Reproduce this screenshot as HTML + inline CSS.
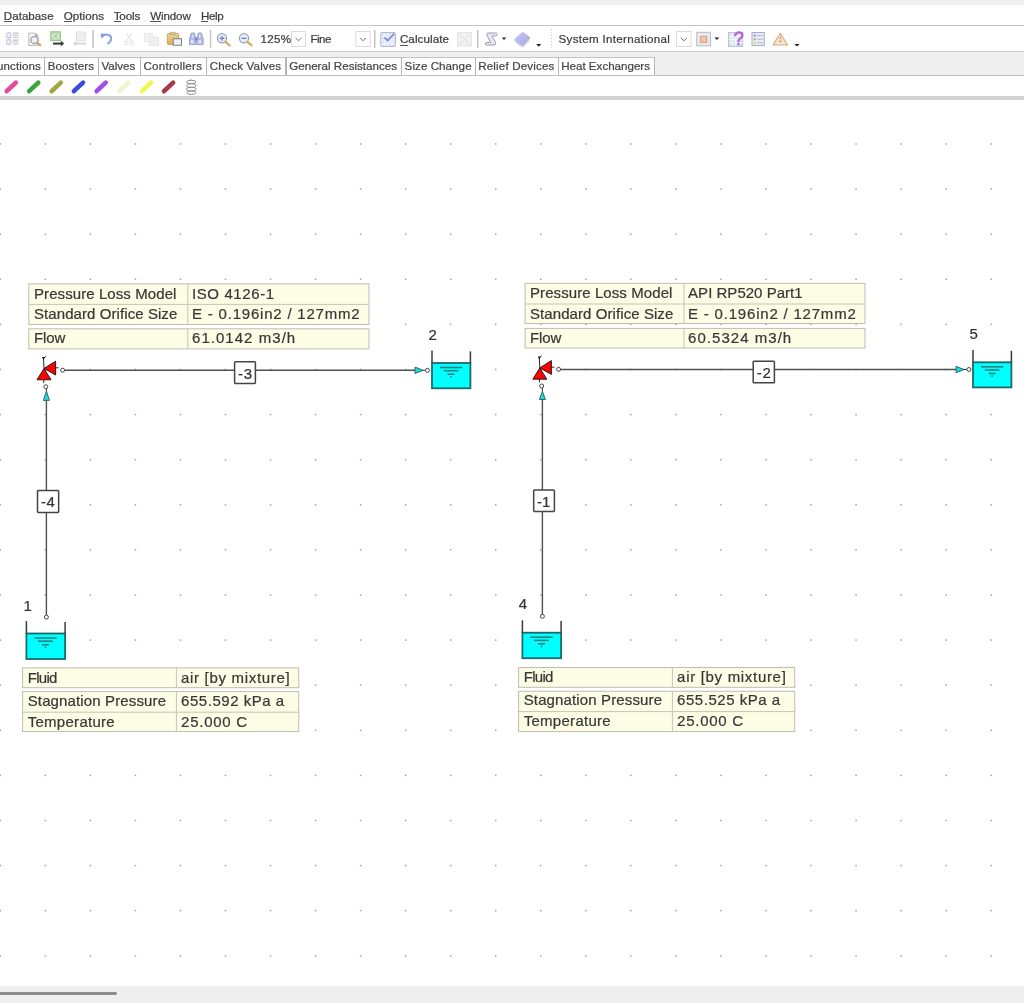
<!DOCTYPE html>
<html><head><meta charset="utf-8">
<style>
html,body{margin:0;padding:0}
body{width:1024px;height:1003px;position:relative;overflow:hidden;background:#fff;font-family:"Liberation Sans",sans-serif;color:#333}
.a{position:absolute}
.t{position:absolute;white-space:nowrap;-webkit-text-stroke:0.22px currentColor}
.hl{position:absolute;left:0;width:1024px}
.mi{position:absolute;top:5px;font-size:12px;line-height:18px;color:#3a3a3a;white-space:nowrap}
.u{text-decoration:underline;text-underline-offset:2px;text-decoration-thickness:1px}
.tab{position:absolute;top:57px;height:18px;background:#fff;font-size:12px;line-height:18px;color:#444;white-space:nowrap;text-align:center}
.tsep{position:absolute;top:57px;width:1px;height:19px;background:#b8b8b8}
.tb{position:absolute;font-size:12px;line-height:14px;color:#3a3a3a;white-space:nowrap}
.sep{position:absolute;top:30px;width:2px;height:18px;background:#c4c4c4}
.dd{position:absolute;top:31px;width:14px;height:15px;border:1px solid #dcdcdc;background:#fff;box-sizing:border-box}
.tbl{position:absolute;background:#fdfde5;border:1px solid #bdbdb3;box-sizing:border-box}
.cell{position:absolute;font-size:15px;line-height:20px;color:#3a3a3a;white-space:nowrap}
.lbl{position:absolute;font-size:15px;line-height:16px;color:#333;white-space:nowrap}
</style></head>
<body>
<div id="wrap" style="position:absolute;left:0;top:0;width:1024px;height:1003px;filter:blur(0.6px)">
<!-- top chrome -->
<div class="hl" style="top:0;height:5px;background:#f0f0f0"></div>
<div class="hl" style="top:25px;height:1px;background:#c6c6c6"></div>
<div class="hl" style="top:51px;height:1px;background:#c8c8c8"></div>
<div class="hl" style="top:52px;height:23px;background:#efefef"></div>
<div class="hl" style="top:75px;height:1px;background:#bdbdbd"></div>
<div class="hl" style="top:96px;height:4px;background:#d2d2d2"></div>
<div class="hl" style="top:986px;height:17px;background:#efefef"></div>
<div class="a" style="left:0;top:992px;width:117px;height:3px;background:#8c8c8c;border-radius:0 2px 2px 0"></div>

<!-- tabs -->
<div class="a" style="left:0;top:57px;width:655px;height:18px;background:#fff;border-top:1px solid #c4c4c4;box-sizing:border-box;height:18px"></div>
<div class="a" style="left:43.5px;top:57px;width:1.3px;height:18px;background:#b4b4b4"></div>
<div class="a" style="left:97.9px;top:57px;width:1.3px;height:18px;background:#b4b4b4"></div>
<div class="a" style="left:140.2px;top:57px;width:1.3px;height:18px;background:#b4b4b4"></div>
<div class="a" style="left:206.0px;top:57px;width:1.3px;height:18px;background:#b4b4b4"></div>
<div class="a" style="left:285.4px;top:57px;width:1.3px;height:18px;background:#b4b4b4"></div>
<div class="a" style="left:401.0px;top:57px;width:1.3px;height:18px;background:#b4b4b4"></div>
<div class="a" style="left:475.2px;top:57px;width:1.3px;height:18px;background:#b4b4b4"></div>
<div class="a" style="left:558.2px;top:57px;width:1.3px;height:18px;background:#b4b4b4"></div>
<div class="a" style="left:653.5px;top:57px;width:1.3px;height:18px;background:#b4b4b4"></div>
<div class="t" style="left:-10.20px;top:59.28px;font-size:11.6px;line-height:14px;letter-spacing:0.088px;color:#454545;">Functions</div>
<div class="t" style="left:47.70px;top:59.28px;font-size:11.6px;line-height:14px;letter-spacing:0.086px;color:#454545;">Boosters</div>
<div class="t" style="left:101.40px;top:59.28px;font-size:11.6px;line-height:14px;letter-spacing:-0.010px;color:#454545;">Valves</div>
<div class="t" style="left:143.50px;top:59.28px;font-size:11.6px;line-height:14px;letter-spacing:0.240px;color:#454545;">Controllers</div>
<div class="t" style="left:209.70px;top:59.28px;font-size:11.6px;line-height:14px;letter-spacing:0.132px;color:#454545;">Check Valves</div>
<div class="t" style="left:289.20px;top:59.28px;font-size:11.6px;line-height:14px;letter-spacing:0.017px;color:#454545;">General Resistances</div>
<div class="t" style="left:404.60px;top:59.28px;font-size:11.6px;line-height:14px;letter-spacing:0.060px;color:#454545;">Size Change</div>
<div class="t" style="left:478.20px;top:59.28px;font-size:11.6px;line-height:14px;letter-spacing:0.158px;color:#454545;">Relief Devices</div>
<div class="t" style="left:561.20px;top:59.28px;font-size:11.6px;line-height:14px;letter-spacing:-0.007px;color:#454545;">Heat Exchangers</div>
<div class="t" style="left:3.80px;top:8.88px;font-size:11.6px;line-height:14px;letter-spacing:0.021px;color:#3c3c3c;">Database</div>
<div class="t" style="left:63.80px;top:8.88px;font-size:11.6px;line-height:14px;letter-spacing:0.033px;color:#3c3c3c;">Options</div>
<div class="t" style="left:113.70px;top:8.88px;font-size:11.6px;line-height:14px;letter-spacing:-0.125px;color:#3c3c3c;">Tools</div>
<div class="t" style="left:150.30px;top:8.88px;font-size:11.6px;line-height:14px;letter-spacing:-0.150px;color:#3c3c3c;">Window</div>
<div class="t" style="left:200.90px;top:8.88px;font-size:11.6px;line-height:14px;letter-spacing:-0.350px;color:#3c3c3c;">Help</div>
<div class="a" style="left:3.8px;top:21px;width:8.2px;height:1px;background:#555"></div>
<div class="a" style="left:63.8px;top:21px;width:8.5px;height:1px;background:#555"></div>
<div class="a" style="left:113.7px;top:21px;width:7.2px;height:1px;background:#555"></div>
<div class="a" style="left:150.3px;top:21px;width:11px;height:1px;background:#555"></div>
<div class="a" style="left:200.9px;top:21px;width:7.6px;height:1px;background:#555"></div>

<!-- pencils -->
<svg class="a" style="left:0;top:76px" width="220" height="20" viewBox="0 76 220 20">
<line x1="6.7" y1="91.2" x2="15.8" y2="82.6" stroke="#e8489c" stroke-width="4.6" stroke-linecap="round"/>
<line x1="29.2" y1="91.2" x2="38.3" y2="82.6" stroke="#3ca43c" stroke-width="4.6" stroke-linecap="round"/>
<line x1="51.7" y1="91.2" x2="60.8" y2="82.6" stroke="#a4a444" stroke-width="4.6" stroke-linecap="round"/>
<line x1="73.9" y1="91.2" x2="83.0" y2="82.6" stroke="#3c4cdc" stroke-width="4.6" stroke-linecap="round"/>
<line x1="96.6" y1="91.2" x2="105.7" y2="82.6" stroke="#a050e8" stroke-width="4.6" stroke-linecap="round"/>
<line x1="119.2" y1="91.2" x2="128.3" y2="82.6" stroke="#eef6d0" stroke-width="4.6" stroke-linecap="round"/>
<line x1="142.0" y1="91.2" x2="151.1" y2="82.6" stroke="#f0f850" stroke-width="4.6" stroke-linecap="round"/>
<line x1="164.0" y1="91.2" x2="173.1" y2="82.6" stroke="#a83a48" stroke-width="4.6" stroke-linecap="round"/>
<g fill="none" stroke="#8a8a8a" stroke-width="1"><ellipse cx="191.3" cy="82" rx="4.6" ry="1.8"/><ellipse cx="191.3" cy="85.6" rx="5" ry="2"/><ellipse cx="191.3" cy="89.2" rx="5" ry="2"/><ellipse cx="191.3" cy="92.6" rx="4.6" ry="1.8"/><line x1="191.3" y1="79.5" x2="191.3" y2="80.5"/></g>
</svg>
<!-- toolbar -->
<div class="t" style="left:260.60px;top:32.38px;font-size:11.6px;line-height:14px;letter-spacing:0.250px;color:#3c3c3c;">125%</div>
<div class="t" style="left:310.40px;top:32.38px;font-size:11.6px;line-height:14px;letter-spacing:-0.483px;color:#3c3c3c;">Fine</div>
<div class="t" style="left:399.90px;top:32.38px;font-size:11.6px;line-height:14px;letter-spacing:0.106px;color:#3c3c3c;">Calculate</div>
<div class="t" style="left:558.50px;top:32.38px;font-size:11.6px;line-height:14px;letter-spacing:0.303px;color:#3c3c3c;">System International</div>
<div class="a" style="left:400px;top:45px;width:8px;height:1px;background:#555"></div>
<svg class="a" style="left:0;top:0" width="1024" height="52" viewBox="0 0 1024 52">
<defs>
<linearGradient id="gold" x1="0" y1="0" x2="0" y2="1"><stop offset="0" stop-color="#e8d49a"/><stop offset="1" stop-color="#e0b048"/></linearGradient>
<linearGradient id="lav" x1="0" y1="0" x2="1" y2="1"><stop offset="0" stop-color="#c4c4f4"/><stop offset="1" stop-color="#a8a8e0"/></linearGradient>
</defs>
<!-- separators -->
<g fill="#c4c4c4">
<rect x="92.3" y="30" width="1.5" height="18"/>
<rect x="209.8" y="30" width="1.5" height="18"/>
<rect x="374" y="30" width="1.5" height="18"/>
<rect x="477" y="30" width="1.5" height="18"/>
</g>
<g fill="#cccccc"><rect x="551" y="29" width="1" height="1.2"/><rect x="551" y="32" width="1" height="1.2"/><rect x="551" y="35" width="1" height="1.2"/><rect x="551" y="38" width="1" height="1.2"/><rect x="551" y="41" width="1" height="1.2"/><rect x="551" y="44" width="1" height="1.2"/><rect x="551" y="47" width="1" height="1.2"/></g>
<!-- 1 list -->
<g fill="#eef0fa" stroke="#c4c8e6" stroke-width="1.1"><rect x="6.6" y="32.8" width="4.4" height="4.8" rx="1.2"/><rect x="6.6" y="39.6" width="4.4" height="4.8" rx="1.2"/></g>
<g fill="#bcbcc6"><rect x="13" y="32.6" width="5.6" height="1.2"/><rect x="13" y="34.8" width="5.6" height="0.9"/><rect x="13" y="36.8" width="5.6" height="0.9"/><rect x="13" y="39.5" width="5.6" height="1.2"/><rect x="13" y="41.6" width="5.6" height="0.9"/><rect x="13" y="43.6" width="5.6" height="0.9"/></g>
<!-- 2 print preview -->
<path d="M28.8,33.2 H35.5 L38,35.7 V45.4 H28.8 Z" fill="#f8f8f8" stroke="#b8b8b8" stroke-width="1"/>
<polygon points="35.3,33.2 38.2,36.2 35.3,36.2" fill="#9a9a9a"/>
<circle cx="34.4" cy="40" r="3.6" fill="#eef2fa" stroke="#a8a8b0" stroke-width="1.5"/>
<line x1="37" y1="42.8" x2="40.2" y2="45.2" stroke="#c8a860" stroke-width="2.2" stroke-linecap="round"/>
<!-- 3 export -->
<rect x="50.8" y="31.8" width="9.5" height="8.8" fill="#c0e0b8" stroke="#94c088" stroke-width="1"/>
<rect x="52.5" y="34" width="6" height="4.4" fill="#e4f2de"/>
<g stroke="#70a868" stroke-width="0.8"><line x1="53.5" y1="34.5" x2="57.5" y2="38"/><line x1="57.5" y1="34.5" x2="53.5" y2="38"/></g>
<line x1="53" y1="43.6" x2="61.5" y2="43.6" stroke="#3a3a3a" stroke-width="2"/>
<polygon points="60.8,40.8 64.2,43.6 60.8,46.4" fill="#3a3a3a"/>
<!-- 4 import disabled -->
<rect x="76.5" y="32" width="8.8" height="8.8" fill="#f0f0f0" stroke="#dedede" stroke-width="1"/>
<line x1="75.5" y1="43.6" x2="86" y2="43.6" stroke="#d4d4d4" stroke-width="1.8"/>
<polygon points="76.2,41 73.2,43.6 76.2,46.2" fill="#d4d4d4"/>
<!-- 5 undo -->
<path d="M103,35.6 Q108.2,32.8 110.8,36.6 Q112,40.6 108.2,43.4" fill="none" stroke="#86a2e2" stroke-width="2" stroke-linecap="round"/>
<polygon points="100.6,33.6 105.8,34 101.6,38.8" fill="#7c9ce0"/>
<!-- 6 cut disabled -->
<g stroke="#e4e4e4" stroke-width="1.1" fill="none"><line x1="126" y1="33" x2="131.8" y2="41"/><line x1="131.8" y1="33" x2="126" y2="41"/><circle cx="126.2" cy="43" r="1.7"/><circle cx="131.6" cy="43" r="1.7"/></g>
<!-- 7 copy disabled -->
<rect x="144.3" y="33.3" width="8" height="8.5" fill="#f2f2f2" stroke="#e8e8e8"/>
<rect x="149.8" y="37.2" width="8.8" height="8.2" fill="#f0f0f0" stroke="#e6e6e6"/>
<!-- 8 paste -->
<rect x="167.3" y="33.5" width="11.4" height="11" rx="1.2" fill="url(#gold)" stroke="#c0a060" stroke-width="0.9"/>
<rect x="170" y="32.4" width="5.5" height="2.4" rx="0.8" fill="#d8d0a0" stroke="#a09060" stroke-width="0.6"/>
<rect x="173.2" y="38.8" width="8.3" height="6.4" fill="#eef0f4" stroke="#787c88" stroke-width="1"/>
<!-- 9 binoculars -->
<g fill="#b4bce6" stroke="#8c96c8" stroke-width="0.8">
<path d="M189.5,44.6 V39 L191.2,33 H194.4 L195.8,39 V44.6 Z"/>
<path d="M196.8,44.6 V39 L198.2,33 H201.4 L203.2,39 V44.6 Z"/>
</g>
<rect x="195.2" y="37.5" width="2.2" height="3" fill="#7480b8"/>
<g fill="#dfe6fa"><rect x="190.8" y="40" width="2.8" height="3.6" rx="1"/><rect x="198.4" y="40" width="2.8" height="3.6" rx="1"/><rect x="192" y="34.5" width="1.4" height="3"/><rect x="199" y="34.5" width="1.4" height="3"/></g>
<!-- 10 zoom in -->
<circle cx="222" cy="38.3" r="4.6" fill="#e8eef8" stroke="#9aa2b4" stroke-width="1.2"/>
<line x1="225.4" y1="41.8" x2="229.6" y2="45.4" stroke="#d0b060" stroke-width="2.3" stroke-linecap="round"/>
<g stroke="#5a78c0" stroke-width="1.2"><line x1="219.6" y1="38.3" x2="224.4" y2="38.3"/><line x1="222" y1="35.9" x2="222" y2="40.7"/></g>
<!-- 11 zoom out -->
<circle cx="244" cy="38.3" r="4.6" fill="#e8eef8" stroke="#9aa2b4" stroke-width="1.2"/>
<line x1="247.4" y1="41.8" x2="251.6" y2="45.4" stroke="#d0b060" stroke-width="2.3" stroke-linecap="round"/>
<line x1="241.6" y1="38.3" x2="246.4" y2="38.3" stroke="#5a78c0" stroke-width="1.2"/>
<!-- dropdowns -->
<g fill="#fff" stroke="#dcdcdc" stroke-width="1">
<rect x="291.5" y="31.5" width="14" height="15"/>
<rect x="355.8" y="31.5" width="14.5" height="15"/>
<rect x="676.5" y="31.5" width="14.5" height="15"/>
</g>
<g fill="none" stroke="#707070" stroke-width="1">
<polyline points="295.5,37.8 298.5,40.8 301.5,37.8"/>
<polyline points="360,37.8 363,40.8 366,37.8"/>
<polyline points="680.8,37.8 683.8,40.8 686.8,37.8"/>
</g>
<!-- 14 calculate -->
<rect x="380.8" y="32.6" width="14.6" height="13.8" rx="0.8" fill="#dfe6f6" stroke="#b0b4cc" stroke-width="1"/>
<g stroke="#f4f6fc" stroke-width="0.8"><line x1="381" y1="36.4" x2="395" y2="36.4"/><line x1="381" y1="40" x2="395" y2="40"/><line x1="381" y1="43.4" x2="395" y2="43.4"/><line x1="384.6" y1="33" x2="384.6" y2="46"/><line x1="388.2" y1="33" x2="388.2" y2="46"/><line x1="391.8" y1="33" x2="391.8" y2="46"/></g>
<polyline points="384.4,37.6 387.6,40.6 394.2,33.6" fill="none" stroke="#8c96da" stroke-width="2.1" stroke-linejoin="round"/>
<!-- 15 disabled -->
<rect x="457.5" y="32.5" width="14" height="13.5" fill="#f0f0f0" stroke="#e4e4e4"/>
<g stroke="#e0e0e0" stroke-width="1"><line x1="459" y1="34" x2="470" y2="45"/><line x1="470" y1="34" x2="459" y2="45"/></g>
<!-- 16 scroll -->
<path d="M487.5,33 H496.5 Q498.5,34.5 496.2,36 H491.8 L495.2,41.6 Q496.8,45 494,45 H486 Q484,44 486,42.5 H490.5 L487.5,36.5 Q486,33.8 487.5,33 Z" fill="#e6e6f4" stroke="#a0a0b4" stroke-width="1"/>
<polygon points="501.8,37.4 506.2,37.4 504,40" fill="#222"/>
<!-- 17 book -->
<path d="M514.8,40.5 Q514.6,39.4 515.6,38.6 L521.6,33 Q522.6,32.2 523.6,32.8 L529.4,37 Q530.4,38 529.4,39 L523.4,45.4 Q522.4,46.4 521.2,45.6 Z" fill="url(#lav)" stroke="#a8a8d8" stroke-width="0.6"/>
<path d="M515,41.6 L521.4,46.6 Q522.6,47.2 523.6,46.4 L529.6,40.2" fill="none" stroke="#d8d8f4" stroke-width="1.2"/>
<polygon points="536.2,44 541.2,44 538.7,46.7" fill="#222"/>
<!-- 20 orange grid -->
<rect x="696.8" y="32.3" width="13.8" height="13.5" fill="#e6eaf2" stroke="#b4bacb" stroke-width="1"/>
<rect x="700.6" y="36.2" width="6.2" height="6.2" fill="#f4c4a8" stroke="#e89070" stroke-width="0.9"/>
<polygon points="714.5,37.4 719.3,37.4 716.9,40" fill="#222"/>
<!-- 21 grid ? -->
<rect x="728.5" y="32.6" width="14.2" height="13.8" fill="#dde6f0" stroke="#b4bccc" stroke-width="1"/>
<g stroke="#f4f8fc" stroke-width="0.9"><line x1="728.5" y1="36.2" x2="742.7" y2="36.2"/><line x1="728.5" y1="39.6" x2="742.7" y2="39.6"/><line x1="728.5" y1="43" x2="742.7" y2="43"/><line x1="732" y1="32.6" x2="732" y2="46.4"/><line x1="735.5" y1="32.6" x2="735.5" y2="46.4"/><line x1="739" y1="32.6" x2="739" y2="46.4"/></g>
<path d="M735.2,35.2 Q736,32.2 739.4,32.4 Q742.6,32.8 742.4,35.6 Q742.2,37.6 740,38.6 Q738.6,39.4 738.6,41.4" fill="none" stroke="#b468d4" stroke-width="2.3" stroke-linecap="round"/>
<circle cx="738.6" cy="44.2" r="1.3" fill="#b468d4"/>
<!-- 22 list -->
<rect x="752" y="32.5" width="12.3" height="13" fill="#e8ecf6" stroke="#a4aec8" stroke-width="1"/>
<g><circle cx="754.8" cy="35.6" r="1.1" fill="#8088d8"/><circle cx="754.8" cy="39.2" r="1.1" fill="#e89070"/><circle cx="754.8" cy="42.8" r="1.1" fill="#e8cc60"/></g>
<g fill="#b0bcd4"><rect x="757" y="35.1" width="6" height="1"/><rect x="757" y="38.7" width="6" height="1"/><rect x="757" y="42.3" width="6" height="1"/></g>
<!-- 23 warning -->
<polygon points="780.3,33.4 787.6,45 773,45" fill="#f6e2c8" stroke="#dcac80" stroke-width="1.1" stroke-linejoin="round"/>
<g fill="#8a7050"><rect x="779.8" y="37.2" width="1.1" height="1.6"/><rect x="779.8" y="40.6" width="1.1" height="1.6"/></g>
<polygon points="794.3,44 799.6,44 796.95,46.4" fill="#222"/>
</svg>


<!-- canvas -->
<svg class="a" style="left:0;top:0" width="1024" height="1003" viewBox="0 0 1024 1003">
<g fill="#a4a4a4"><rect x="-0.45" y="143.23" width="1.5" height="1.5"/>
<rect x="44.59" y="143.23" width="1.5" height="1.5"/>
<rect x="89.63" y="143.23" width="1.5" height="1.5"/>
<rect x="134.67" y="143.23" width="1.5" height="1.5"/>
<rect x="179.71" y="143.23" width="1.5" height="1.5"/>
<rect x="224.75" y="143.23" width="1.5" height="1.5"/>
<rect x="269.79" y="143.23" width="1.5" height="1.5"/>
<rect x="314.83" y="143.23" width="1.5" height="1.5"/>
<rect x="359.87" y="143.23" width="1.5" height="1.5"/>
<rect x="404.91" y="143.23" width="1.5" height="1.5"/>
<rect x="449.95" y="143.23" width="1.5" height="1.5"/>
<rect x="494.99" y="143.23" width="1.5" height="1.5"/>
<rect x="540.03" y="143.23" width="1.5" height="1.5"/>
<rect x="585.07" y="143.23" width="1.5" height="1.5"/>
<rect x="630.11" y="143.23" width="1.5" height="1.5"/>
<rect x="675.15" y="143.23" width="1.5" height="1.5"/>
<rect x="720.19" y="143.23" width="1.5" height="1.5"/>
<rect x="765.23" y="143.23" width="1.5" height="1.5"/>
<rect x="810.27" y="143.23" width="1.5" height="1.5"/>
<rect x="855.31" y="143.23" width="1.5" height="1.5"/>
<rect x="900.35" y="143.23" width="1.5" height="1.5"/>
<rect x="945.39" y="143.23" width="1.5" height="1.5"/>
<rect x="990.43" y="143.23" width="1.5" height="1.5"/>
<rect x="-0.45" y="188.33" width="1.5" height="1.5"/>
<rect x="44.59" y="188.33" width="1.5" height="1.5"/>
<rect x="89.63" y="188.33" width="1.5" height="1.5"/>
<rect x="134.67" y="188.33" width="1.5" height="1.5"/>
<rect x="179.71" y="188.33" width="1.5" height="1.5"/>
<rect x="224.75" y="188.33" width="1.5" height="1.5"/>
<rect x="269.79" y="188.33" width="1.5" height="1.5"/>
<rect x="314.83" y="188.33" width="1.5" height="1.5"/>
<rect x="359.87" y="188.33" width="1.5" height="1.5"/>
<rect x="404.91" y="188.33" width="1.5" height="1.5"/>
<rect x="449.95" y="188.33" width="1.5" height="1.5"/>
<rect x="494.99" y="188.33" width="1.5" height="1.5"/>
<rect x="540.03" y="188.33" width="1.5" height="1.5"/>
<rect x="585.07" y="188.33" width="1.5" height="1.5"/>
<rect x="630.11" y="188.33" width="1.5" height="1.5"/>
<rect x="675.15" y="188.33" width="1.5" height="1.5"/>
<rect x="720.19" y="188.33" width="1.5" height="1.5"/>
<rect x="765.23" y="188.33" width="1.5" height="1.5"/>
<rect x="810.27" y="188.33" width="1.5" height="1.5"/>
<rect x="855.31" y="188.33" width="1.5" height="1.5"/>
<rect x="900.35" y="188.33" width="1.5" height="1.5"/>
<rect x="945.39" y="188.33" width="1.5" height="1.5"/>
<rect x="990.43" y="188.33" width="1.5" height="1.5"/>
<rect x="-0.45" y="233.43" width="1.5" height="1.5"/>
<rect x="44.59" y="233.43" width="1.5" height="1.5"/>
<rect x="89.63" y="233.43" width="1.5" height="1.5"/>
<rect x="134.67" y="233.43" width="1.5" height="1.5"/>
<rect x="179.71" y="233.43" width="1.5" height="1.5"/>
<rect x="224.75" y="233.43" width="1.5" height="1.5"/>
<rect x="269.79" y="233.43" width="1.5" height="1.5"/>
<rect x="314.83" y="233.43" width="1.5" height="1.5"/>
<rect x="359.87" y="233.43" width="1.5" height="1.5"/>
<rect x="404.91" y="233.43" width="1.5" height="1.5"/>
<rect x="449.95" y="233.43" width="1.5" height="1.5"/>
<rect x="494.99" y="233.43" width="1.5" height="1.5"/>
<rect x="540.03" y="233.43" width="1.5" height="1.5"/>
<rect x="585.07" y="233.43" width="1.5" height="1.5"/>
<rect x="630.11" y="233.43" width="1.5" height="1.5"/>
<rect x="675.15" y="233.43" width="1.5" height="1.5"/>
<rect x="720.19" y="233.43" width="1.5" height="1.5"/>
<rect x="765.23" y="233.43" width="1.5" height="1.5"/>
<rect x="810.27" y="233.43" width="1.5" height="1.5"/>
<rect x="855.31" y="233.43" width="1.5" height="1.5"/>
<rect x="900.35" y="233.43" width="1.5" height="1.5"/>
<rect x="945.39" y="233.43" width="1.5" height="1.5"/>
<rect x="990.43" y="233.43" width="1.5" height="1.5"/>
<rect x="-0.45" y="278.53" width="1.5" height="1.5"/>
<rect x="44.59" y="278.53" width="1.5" height="1.5"/>
<rect x="89.63" y="278.53" width="1.5" height="1.5"/>
<rect x="134.67" y="278.53" width="1.5" height="1.5"/>
<rect x="179.71" y="278.53" width="1.5" height="1.5"/>
<rect x="224.75" y="278.53" width="1.5" height="1.5"/>
<rect x="269.79" y="278.53" width="1.5" height="1.5"/>
<rect x="314.83" y="278.53" width="1.5" height="1.5"/>
<rect x="359.87" y="278.53" width="1.5" height="1.5"/>
<rect x="404.91" y="278.53" width="1.5" height="1.5"/>
<rect x="449.95" y="278.53" width="1.5" height="1.5"/>
<rect x="494.99" y="278.53" width="1.5" height="1.5"/>
<rect x="540.03" y="278.53" width="1.5" height="1.5"/>
<rect x="585.07" y="278.53" width="1.5" height="1.5"/>
<rect x="630.11" y="278.53" width="1.5" height="1.5"/>
<rect x="675.15" y="278.53" width="1.5" height="1.5"/>
<rect x="720.19" y="278.53" width="1.5" height="1.5"/>
<rect x="765.23" y="278.53" width="1.5" height="1.5"/>
<rect x="810.27" y="278.53" width="1.5" height="1.5"/>
<rect x="855.31" y="278.53" width="1.5" height="1.5"/>
<rect x="900.35" y="278.53" width="1.5" height="1.5"/>
<rect x="945.39" y="278.53" width="1.5" height="1.5"/>
<rect x="990.43" y="278.53" width="1.5" height="1.5"/>
<rect x="-0.45" y="323.63" width="1.5" height="1.5"/>
<rect x="44.59" y="323.63" width="1.5" height="1.5"/>
<rect x="89.63" y="323.63" width="1.5" height="1.5"/>
<rect x="134.67" y="323.63" width="1.5" height="1.5"/>
<rect x="179.71" y="323.63" width="1.5" height="1.5"/>
<rect x="224.75" y="323.63" width="1.5" height="1.5"/>
<rect x="269.79" y="323.63" width="1.5" height="1.5"/>
<rect x="314.83" y="323.63" width="1.5" height="1.5"/>
<rect x="359.87" y="323.63" width="1.5" height="1.5"/>
<rect x="404.91" y="323.63" width="1.5" height="1.5"/>
<rect x="449.95" y="323.63" width="1.5" height="1.5"/>
<rect x="494.99" y="323.63" width="1.5" height="1.5"/>
<rect x="540.03" y="323.63" width="1.5" height="1.5"/>
<rect x="585.07" y="323.63" width="1.5" height="1.5"/>
<rect x="630.11" y="323.63" width="1.5" height="1.5"/>
<rect x="675.15" y="323.63" width="1.5" height="1.5"/>
<rect x="720.19" y="323.63" width="1.5" height="1.5"/>
<rect x="765.23" y="323.63" width="1.5" height="1.5"/>
<rect x="810.27" y="323.63" width="1.5" height="1.5"/>
<rect x="855.31" y="323.63" width="1.5" height="1.5"/>
<rect x="900.35" y="323.63" width="1.5" height="1.5"/>
<rect x="945.39" y="323.63" width="1.5" height="1.5"/>
<rect x="990.43" y="323.63" width="1.5" height="1.5"/>
<rect x="-0.45" y="368.73" width="1.5" height="1.5"/>
<rect x="44.59" y="368.73" width="1.5" height="1.5"/>
<rect x="89.63" y="368.73" width="1.5" height="1.5"/>
<rect x="134.67" y="368.73" width="1.5" height="1.5"/>
<rect x="179.71" y="368.73" width="1.5" height="1.5"/>
<rect x="224.75" y="368.73" width="1.5" height="1.5"/>
<rect x="269.79" y="368.73" width="1.5" height="1.5"/>
<rect x="314.83" y="368.73" width="1.5" height="1.5"/>
<rect x="359.87" y="368.73" width="1.5" height="1.5"/>
<rect x="404.91" y="368.73" width="1.5" height="1.5"/>
<rect x="449.95" y="368.73" width="1.5" height="1.5"/>
<rect x="494.99" y="368.73" width="1.5" height="1.5"/>
<rect x="540.03" y="368.73" width="1.5" height="1.5"/>
<rect x="585.07" y="368.73" width="1.5" height="1.5"/>
<rect x="630.11" y="368.73" width="1.5" height="1.5"/>
<rect x="675.15" y="368.73" width="1.5" height="1.5"/>
<rect x="720.19" y="368.73" width="1.5" height="1.5"/>
<rect x="765.23" y="368.73" width="1.5" height="1.5"/>
<rect x="810.27" y="368.73" width="1.5" height="1.5"/>
<rect x="855.31" y="368.73" width="1.5" height="1.5"/>
<rect x="900.35" y="368.73" width="1.5" height="1.5"/>
<rect x="945.39" y="368.73" width="1.5" height="1.5"/>
<rect x="990.43" y="368.73" width="1.5" height="1.5"/>
<rect x="-0.45" y="413.83" width="1.5" height="1.5"/>
<rect x="44.59" y="413.83" width="1.5" height="1.5"/>
<rect x="89.63" y="413.83" width="1.5" height="1.5"/>
<rect x="134.67" y="413.83" width="1.5" height="1.5"/>
<rect x="179.71" y="413.83" width="1.5" height="1.5"/>
<rect x="224.75" y="413.83" width="1.5" height="1.5"/>
<rect x="269.79" y="413.83" width="1.5" height="1.5"/>
<rect x="314.83" y="413.83" width="1.5" height="1.5"/>
<rect x="359.87" y="413.83" width="1.5" height="1.5"/>
<rect x="404.91" y="413.83" width="1.5" height="1.5"/>
<rect x="449.95" y="413.83" width="1.5" height="1.5"/>
<rect x="494.99" y="413.83" width="1.5" height="1.5"/>
<rect x="540.03" y="413.83" width="1.5" height="1.5"/>
<rect x="585.07" y="413.83" width="1.5" height="1.5"/>
<rect x="630.11" y="413.83" width="1.5" height="1.5"/>
<rect x="675.15" y="413.83" width="1.5" height="1.5"/>
<rect x="720.19" y="413.83" width="1.5" height="1.5"/>
<rect x="765.23" y="413.83" width="1.5" height="1.5"/>
<rect x="810.27" y="413.83" width="1.5" height="1.5"/>
<rect x="855.31" y="413.83" width="1.5" height="1.5"/>
<rect x="900.35" y="413.83" width="1.5" height="1.5"/>
<rect x="945.39" y="413.83" width="1.5" height="1.5"/>
<rect x="990.43" y="413.83" width="1.5" height="1.5"/>
<rect x="-0.45" y="458.93" width="1.5" height="1.5"/>
<rect x="44.59" y="458.93" width="1.5" height="1.5"/>
<rect x="89.63" y="458.93" width="1.5" height="1.5"/>
<rect x="134.67" y="458.93" width="1.5" height="1.5"/>
<rect x="179.71" y="458.93" width="1.5" height="1.5"/>
<rect x="224.75" y="458.93" width="1.5" height="1.5"/>
<rect x="269.79" y="458.93" width="1.5" height="1.5"/>
<rect x="314.83" y="458.93" width="1.5" height="1.5"/>
<rect x="359.87" y="458.93" width="1.5" height="1.5"/>
<rect x="404.91" y="458.93" width="1.5" height="1.5"/>
<rect x="449.95" y="458.93" width="1.5" height="1.5"/>
<rect x="494.99" y="458.93" width="1.5" height="1.5"/>
<rect x="540.03" y="458.93" width="1.5" height="1.5"/>
<rect x="585.07" y="458.93" width="1.5" height="1.5"/>
<rect x="630.11" y="458.93" width="1.5" height="1.5"/>
<rect x="675.15" y="458.93" width="1.5" height="1.5"/>
<rect x="720.19" y="458.93" width="1.5" height="1.5"/>
<rect x="765.23" y="458.93" width="1.5" height="1.5"/>
<rect x="810.27" y="458.93" width="1.5" height="1.5"/>
<rect x="855.31" y="458.93" width="1.5" height="1.5"/>
<rect x="900.35" y="458.93" width="1.5" height="1.5"/>
<rect x="945.39" y="458.93" width="1.5" height="1.5"/>
<rect x="990.43" y="458.93" width="1.5" height="1.5"/>
<rect x="-0.45" y="504.03" width="1.5" height="1.5"/>
<rect x="44.59" y="504.03" width="1.5" height="1.5"/>
<rect x="89.63" y="504.03" width="1.5" height="1.5"/>
<rect x="134.67" y="504.03" width="1.5" height="1.5"/>
<rect x="179.71" y="504.03" width="1.5" height="1.5"/>
<rect x="224.75" y="504.03" width="1.5" height="1.5"/>
<rect x="269.79" y="504.03" width="1.5" height="1.5"/>
<rect x="314.83" y="504.03" width="1.5" height="1.5"/>
<rect x="359.87" y="504.03" width="1.5" height="1.5"/>
<rect x="404.91" y="504.03" width="1.5" height="1.5"/>
<rect x="449.95" y="504.03" width="1.5" height="1.5"/>
<rect x="494.99" y="504.03" width="1.5" height="1.5"/>
<rect x="540.03" y="504.03" width="1.5" height="1.5"/>
<rect x="585.07" y="504.03" width="1.5" height="1.5"/>
<rect x="630.11" y="504.03" width="1.5" height="1.5"/>
<rect x="675.15" y="504.03" width="1.5" height="1.5"/>
<rect x="720.19" y="504.03" width="1.5" height="1.5"/>
<rect x="765.23" y="504.03" width="1.5" height="1.5"/>
<rect x="810.27" y="504.03" width="1.5" height="1.5"/>
<rect x="855.31" y="504.03" width="1.5" height="1.5"/>
<rect x="900.35" y="504.03" width="1.5" height="1.5"/>
<rect x="945.39" y="504.03" width="1.5" height="1.5"/>
<rect x="990.43" y="504.03" width="1.5" height="1.5"/>
<rect x="-0.45" y="549.13" width="1.5" height="1.5"/>
<rect x="44.59" y="549.13" width="1.5" height="1.5"/>
<rect x="89.63" y="549.13" width="1.5" height="1.5"/>
<rect x="134.67" y="549.13" width="1.5" height="1.5"/>
<rect x="179.71" y="549.13" width="1.5" height="1.5"/>
<rect x="224.75" y="549.13" width="1.5" height="1.5"/>
<rect x="269.79" y="549.13" width="1.5" height="1.5"/>
<rect x="314.83" y="549.13" width="1.5" height="1.5"/>
<rect x="359.87" y="549.13" width="1.5" height="1.5"/>
<rect x="404.91" y="549.13" width="1.5" height="1.5"/>
<rect x="449.95" y="549.13" width="1.5" height="1.5"/>
<rect x="494.99" y="549.13" width="1.5" height="1.5"/>
<rect x="540.03" y="549.13" width="1.5" height="1.5"/>
<rect x="585.07" y="549.13" width="1.5" height="1.5"/>
<rect x="630.11" y="549.13" width="1.5" height="1.5"/>
<rect x="675.15" y="549.13" width="1.5" height="1.5"/>
<rect x="720.19" y="549.13" width="1.5" height="1.5"/>
<rect x="765.23" y="549.13" width="1.5" height="1.5"/>
<rect x="810.27" y="549.13" width="1.5" height="1.5"/>
<rect x="855.31" y="549.13" width="1.5" height="1.5"/>
<rect x="900.35" y="549.13" width="1.5" height="1.5"/>
<rect x="945.39" y="549.13" width="1.5" height="1.5"/>
<rect x="990.43" y="549.13" width="1.5" height="1.5"/>
<rect x="-0.45" y="594.23" width="1.5" height="1.5"/>
<rect x="44.59" y="594.23" width="1.5" height="1.5"/>
<rect x="89.63" y="594.23" width="1.5" height="1.5"/>
<rect x="134.67" y="594.23" width="1.5" height="1.5"/>
<rect x="179.71" y="594.23" width="1.5" height="1.5"/>
<rect x="224.75" y="594.23" width="1.5" height="1.5"/>
<rect x="269.79" y="594.23" width="1.5" height="1.5"/>
<rect x="314.83" y="594.23" width="1.5" height="1.5"/>
<rect x="359.87" y="594.23" width="1.5" height="1.5"/>
<rect x="404.91" y="594.23" width="1.5" height="1.5"/>
<rect x="449.95" y="594.23" width="1.5" height="1.5"/>
<rect x="494.99" y="594.23" width="1.5" height="1.5"/>
<rect x="540.03" y="594.23" width="1.5" height="1.5"/>
<rect x="585.07" y="594.23" width="1.5" height="1.5"/>
<rect x="630.11" y="594.23" width="1.5" height="1.5"/>
<rect x="675.15" y="594.23" width="1.5" height="1.5"/>
<rect x="720.19" y="594.23" width="1.5" height="1.5"/>
<rect x="765.23" y="594.23" width="1.5" height="1.5"/>
<rect x="810.27" y="594.23" width="1.5" height="1.5"/>
<rect x="855.31" y="594.23" width="1.5" height="1.5"/>
<rect x="900.35" y="594.23" width="1.5" height="1.5"/>
<rect x="945.39" y="594.23" width="1.5" height="1.5"/>
<rect x="990.43" y="594.23" width="1.5" height="1.5"/>
<rect x="-0.45" y="639.33" width="1.5" height="1.5"/>
<rect x="44.59" y="639.33" width="1.5" height="1.5"/>
<rect x="89.63" y="639.33" width="1.5" height="1.5"/>
<rect x="134.67" y="639.33" width="1.5" height="1.5"/>
<rect x="179.71" y="639.33" width="1.5" height="1.5"/>
<rect x="224.75" y="639.33" width="1.5" height="1.5"/>
<rect x="269.79" y="639.33" width="1.5" height="1.5"/>
<rect x="314.83" y="639.33" width="1.5" height="1.5"/>
<rect x="359.87" y="639.33" width="1.5" height="1.5"/>
<rect x="404.91" y="639.33" width="1.5" height="1.5"/>
<rect x="449.95" y="639.33" width="1.5" height="1.5"/>
<rect x="494.99" y="639.33" width="1.5" height="1.5"/>
<rect x="540.03" y="639.33" width="1.5" height="1.5"/>
<rect x="585.07" y="639.33" width="1.5" height="1.5"/>
<rect x="630.11" y="639.33" width="1.5" height="1.5"/>
<rect x="675.15" y="639.33" width="1.5" height="1.5"/>
<rect x="720.19" y="639.33" width="1.5" height="1.5"/>
<rect x="765.23" y="639.33" width="1.5" height="1.5"/>
<rect x="810.27" y="639.33" width="1.5" height="1.5"/>
<rect x="855.31" y="639.33" width="1.5" height="1.5"/>
<rect x="900.35" y="639.33" width="1.5" height="1.5"/>
<rect x="945.39" y="639.33" width="1.5" height="1.5"/>
<rect x="990.43" y="639.33" width="1.5" height="1.5"/>
<rect x="-0.45" y="684.43" width="1.5" height="1.5"/>
<rect x="44.59" y="684.43" width="1.5" height="1.5"/>
<rect x="89.63" y="684.43" width="1.5" height="1.5"/>
<rect x="134.67" y="684.43" width="1.5" height="1.5"/>
<rect x="179.71" y="684.43" width="1.5" height="1.5"/>
<rect x="224.75" y="684.43" width="1.5" height="1.5"/>
<rect x="269.79" y="684.43" width="1.5" height="1.5"/>
<rect x="314.83" y="684.43" width="1.5" height="1.5"/>
<rect x="359.87" y="684.43" width="1.5" height="1.5"/>
<rect x="404.91" y="684.43" width="1.5" height="1.5"/>
<rect x="449.95" y="684.43" width="1.5" height="1.5"/>
<rect x="494.99" y="684.43" width="1.5" height="1.5"/>
<rect x="540.03" y="684.43" width="1.5" height="1.5"/>
<rect x="585.07" y="684.43" width="1.5" height="1.5"/>
<rect x="630.11" y="684.43" width="1.5" height="1.5"/>
<rect x="675.15" y="684.43" width="1.5" height="1.5"/>
<rect x="720.19" y="684.43" width="1.5" height="1.5"/>
<rect x="765.23" y="684.43" width="1.5" height="1.5"/>
<rect x="810.27" y="684.43" width="1.5" height="1.5"/>
<rect x="855.31" y="684.43" width="1.5" height="1.5"/>
<rect x="900.35" y="684.43" width="1.5" height="1.5"/>
<rect x="945.39" y="684.43" width="1.5" height="1.5"/>
<rect x="990.43" y="684.43" width="1.5" height="1.5"/>
<rect x="-0.45" y="729.53" width="1.5" height="1.5"/>
<rect x="44.59" y="729.53" width="1.5" height="1.5"/>
<rect x="89.63" y="729.53" width="1.5" height="1.5"/>
<rect x="134.67" y="729.53" width="1.5" height="1.5"/>
<rect x="179.71" y="729.53" width="1.5" height="1.5"/>
<rect x="224.75" y="729.53" width="1.5" height="1.5"/>
<rect x="269.79" y="729.53" width="1.5" height="1.5"/>
<rect x="314.83" y="729.53" width="1.5" height="1.5"/>
<rect x="359.87" y="729.53" width="1.5" height="1.5"/>
<rect x="404.91" y="729.53" width="1.5" height="1.5"/>
<rect x="449.95" y="729.53" width="1.5" height="1.5"/>
<rect x="494.99" y="729.53" width="1.5" height="1.5"/>
<rect x="540.03" y="729.53" width="1.5" height="1.5"/>
<rect x="585.07" y="729.53" width="1.5" height="1.5"/>
<rect x="630.11" y="729.53" width="1.5" height="1.5"/>
<rect x="675.15" y="729.53" width="1.5" height="1.5"/>
<rect x="720.19" y="729.53" width="1.5" height="1.5"/>
<rect x="765.23" y="729.53" width="1.5" height="1.5"/>
<rect x="810.27" y="729.53" width="1.5" height="1.5"/>
<rect x="855.31" y="729.53" width="1.5" height="1.5"/>
<rect x="900.35" y="729.53" width="1.5" height="1.5"/>
<rect x="945.39" y="729.53" width="1.5" height="1.5"/>
<rect x="990.43" y="729.53" width="1.5" height="1.5"/>
<rect x="-0.45" y="774.63" width="1.5" height="1.5"/>
<rect x="44.59" y="774.63" width="1.5" height="1.5"/>
<rect x="89.63" y="774.63" width="1.5" height="1.5"/>
<rect x="134.67" y="774.63" width="1.5" height="1.5"/>
<rect x="179.71" y="774.63" width="1.5" height="1.5"/>
<rect x="224.75" y="774.63" width="1.5" height="1.5"/>
<rect x="269.79" y="774.63" width="1.5" height="1.5"/>
<rect x="314.83" y="774.63" width="1.5" height="1.5"/>
<rect x="359.87" y="774.63" width="1.5" height="1.5"/>
<rect x="404.91" y="774.63" width="1.5" height="1.5"/>
<rect x="449.95" y="774.63" width="1.5" height="1.5"/>
<rect x="494.99" y="774.63" width="1.5" height="1.5"/>
<rect x="540.03" y="774.63" width="1.5" height="1.5"/>
<rect x="585.07" y="774.63" width="1.5" height="1.5"/>
<rect x="630.11" y="774.63" width="1.5" height="1.5"/>
<rect x="675.15" y="774.63" width="1.5" height="1.5"/>
<rect x="720.19" y="774.63" width="1.5" height="1.5"/>
<rect x="765.23" y="774.63" width="1.5" height="1.5"/>
<rect x="810.27" y="774.63" width="1.5" height="1.5"/>
<rect x="855.31" y="774.63" width="1.5" height="1.5"/>
<rect x="900.35" y="774.63" width="1.5" height="1.5"/>
<rect x="945.39" y="774.63" width="1.5" height="1.5"/>
<rect x="990.43" y="774.63" width="1.5" height="1.5"/>
<rect x="-0.45" y="819.73" width="1.5" height="1.5"/>
<rect x="44.59" y="819.73" width="1.5" height="1.5"/>
<rect x="89.63" y="819.73" width="1.5" height="1.5"/>
<rect x="134.67" y="819.73" width="1.5" height="1.5"/>
<rect x="179.71" y="819.73" width="1.5" height="1.5"/>
<rect x="224.75" y="819.73" width="1.5" height="1.5"/>
<rect x="269.79" y="819.73" width="1.5" height="1.5"/>
<rect x="314.83" y="819.73" width="1.5" height="1.5"/>
<rect x="359.87" y="819.73" width="1.5" height="1.5"/>
<rect x="404.91" y="819.73" width="1.5" height="1.5"/>
<rect x="449.95" y="819.73" width="1.5" height="1.5"/>
<rect x="494.99" y="819.73" width="1.5" height="1.5"/>
<rect x="540.03" y="819.73" width="1.5" height="1.5"/>
<rect x="585.07" y="819.73" width="1.5" height="1.5"/>
<rect x="630.11" y="819.73" width="1.5" height="1.5"/>
<rect x="675.15" y="819.73" width="1.5" height="1.5"/>
<rect x="720.19" y="819.73" width="1.5" height="1.5"/>
<rect x="765.23" y="819.73" width="1.5" height="1.5"/>
<rect x="810.27" y="819.73" width="1.5" height="1.5"/>
<rect x="855.31" y="819.73" width="1.5" height="1.5"/>
<rect x="900.35" y="819.73" width="1.5" height="1.5"/>
<rect x="945.39" y="819.73" width="1.5" height="1.5"/>
<rect x="990.43" y="819.73" width="1.5" height="1.5"/>
<rect x="-0.45" y="864.83" width="1.5" height="1.5"/>
<rect x="44.59" y="864.83" width="1.5" height="1.5"/>
<rect x="89.63" y="864.83" width="1.5" height="1.5"/>
<rect x="134.67" y="864.83" width="1.5" height="1.5"/>
<rect x="179.71" y="864.83" width="1.5" height="1.5"/>
<rect x="224.75" y="864.83" width="1.5" height="1.5"/>
<rect x="269.79" y="864.83" width="1.5" height="1.5"/>
<rect x="314.83" y="864.83" width="1.5" height="1.5"/>
<rect x="359.87" y="864.83" width="1.5" height="1.5"/>
<rect x="404.91" y="864.83" width="1.5" height="1.5"/>
<rect x="449.95" y="864.83" width="1.5" height="1.5"/>
<rect x="494.99" y="864.83" width="1.5" height="1.5"/>
<rect x="540.03" y="864.83" width="1.5" height="1.5"/>
<rect x="585.07" y="864.83" width="1.5" height="1.5"/>
<rect x="630.11" y="864.83" width="1.5" height="1.5"/>
<rect x="675.15" y="864.83" width="1.5" height="1.5"/>
<rect x="720.19" y="864.83" width="1.5" height="1.5"/>
<rect x="765.23" y="864.83" width="1.5" height="1.5"/>
<rect x="810.27" y="864.83" width="1.5" height="1.5"/>
<rect x="855.31" y="864.83" width="1.5" height="1.5"/>
<rect x="900.35" y="864.83" width="1.5" height="1.5"/>
<rect x="945.39" y="864.83" width="1.5" height="1.5"/>
<rect x="990.43" y="864.83" width="1.5" height="1.5"/>
<rect x="-0.45" y="909.93" width="1.5" height="1.5"/>
<rect x="44.59" y="909.93" width="1.5" height="1.5"/>
<rect x="89.63" y="909.93" width="1.5" height="1.5"/>
<rect x="134.67" y="909.93" width="1.5" height="1.5"/>
<rect x="179.71" y="909.93" width="1.5" height="1.5"/>
<rect x="224.75" y="909.93" width="1.5" height="1.5"/>
<rect x="269.79" y="909.93" width="1.5" height="1.5"/>
<rect x="314.83" y="909.93" width="1.5" height="1.5"/>
<rect x="359.87" y="909.93" width="1.5" height="1.5"/>
<rect x="404.91" y="909.93" width="1.5" height="1.5"/>
<rect x="449.95" y="909.93" width="1.5" height="1.5"/>
<rect x="494.99" y="909.93" width="1.5" height="1.5"/>
<rect x="540.03" y="909.93" width="1.5" height="1.5"/>
<rect x="585.07" y="909.93" width="1.5" height="1.5"/>
<rect x="630.11" y="909.93" width="1.5" height="1.5"/>
<rect x="675.15" y="909.93" width="1.5" height="1.5"/>
<rect x="720.19" y="909.93" width="1.5" height="1.5"/>
<rect x="765.23" y="909.93" width="1.5" height="1.5"/>
<rect x="810.27" y="909.93" width="1.5" height="1.5"/>
<rect x="855.31" y="909.93" width="1.5" height="1.5"/>
<rect x="900.35" y="909.93" width="1.5" height="1.5"/>
<rect x="945.39" y="909.93" width="1.5" height="1.5"/>
<rect x="990.43" y="909.93" width="1.5" height="1.5"/>
<rect x="-0.45" y="955.03" width="1.5" height="1.5"/>
<rect x="44.59" y="955.03" width="1.5" height="1.5"/>
<rect x="89.63" y="955.03" width="1.5" height="1.5"/>
<rect x="134.67" y="955.03" width="1.5" height="1.5"/>
<rect x="179.71" y="955.03" width="1.5" height="1.5"/>
<rect x="224.75" y="955.03" width="1.5" height="1.5"/>
<rect x="269.79" y="955.03" width="1.5" height="1.5"/>
<rect x="314.83" y="955.03" width="1.5" height="1.5"/>
<rect x="359.87" y="955.03" width="1.5" height="1.5"/>
<rect x="404.91" y="955.03" width="1.5" height="1.5"/>
<rect x="449.95" y="955.03" width="1.5" height="1.5"/>
<rect x="494.99" y="955.03" width="1.5" height="1.5"/>
<rect x="540.03" y="955.03" width="1.5" height="1.5"/>
<rect x="585.07" y="955.03" width="1.5" height="1.5"/>
<rect x="630.11" y="955.03" width="1.5" height="1.5"/>
<rect x="675.15" y="955.03" width="1.5" height="1.5"/>
<rect x="720.19" y="955.03" width="1.5" height="1.5"/>
<rect x="765.23" y="955.03" width="1.5" height="1.5"/>
<rect x="810.27" y="955.03" width="1.5" height="1.5"/>
<rect x="855.31" y="955.03" width="1.5" height="1.5"/>
<rect x="900.35" y="955.03" width="1.5" height="1.5"/>
<rect x="945.39" y="955.03" width="1.5" height="1.5"/>
<rect x="990.43" y="955.03" width="1.5" height="1.5"/></g>
<g stroke="#111" stroke-width="0.9" stroke-linejoin="miter">
<polygon points="44,368.5 37,379.8 51,379.8" fill="#f00"/>
<polygon points="44,368.5 55.6,361.2 55.6,375.0" fill="#f00"/>
<line x1="44" y1="368.5" x2="43.5" y2="358.0"/>
<line x1="43.7" y1="379.8" x2="43.7" y2="383.0"/>
<line x1="55.6" y1="367.8" x2="58.6" y2="367.8"/>
</g>
<polygon points="42,357.0 45.2,357.0 43.5,360.0" fill="#111"/>
<line x1="44.5" y1="357.5" x2="46.2" y2="356.0" stroke="#111" stroke-width="0.7"/>
<line x1="64.6" y1="370.3" x2="415" y2="370.3" stroke="#505050" stroke-width="1.4"/>
<polygon points="415,367.1 423.3,370.3 415,373.5" fill="#25d5dc" stroke="#1e6060" stroke-width="0.9"/>
<line x1="423.3" y1="370.3" x2="425.5" y2="370.3" stroke="#333" stroke-width="1"/>
<circle cx="62.6" cy="370.2" r="2" fill="#fff" stroke="#333" stroke-width="0.9"/>
<circle cx="427.5" cy="370.3" r="2" fill="#fff" stroke="#333" stroke-width="0.9"/>
<line x1="46.4" y1="400.4" x2="46.4" y2="615.1" stroke="#505050" stroke-width="1.4"/>
<polygon points="43.4,400.4 46.4,391 49.4,400.4" fill="#25d5dc" stroke="#1e6060" stroke-width="0.9"/>
<line x1="46.4" y1="391" x2="46.4" y2="388.7" stroke="#333" stroke-width="1"/>
<circle cx="45.8" cy="386.7" r="2" fill="#fff" stroke="#333" stroke-width="0.9"/>
<circle cx="46.4" cy="617.1" r="2" fill="#fff" stroke="#333" stroke-width="0.9"/>
<rect x="234.6" y="361.7" width="20.8" height="21.7" fill="#fff" stroke="#444" stroke-width="1.5" rx="0.8"/>
<rect x="37.5" y="490.5" width="21.15" height="21.9" fill="#fff" stroke="#444" stroke-width="1.5" rx="0.8"/>
<rect x="432" y="363" width="38.39999999999998" height="25.30000000000001" fill="#00ffff" stroke="#1e6a6a" stroke-width="1.8"/>
<g stroke="#3a3a3a" stroke-width="1.5"><line x1="432" y1="350.5" x2="432" y2="363"/><line x1="470.4" y1="351.3" x2="470.4" y2="363"/></g>
<g stroke="#1e8080" stroke-width="1.6"><line x1="440" y1="367.5" x2="462.2" y2="367.5"/><line x1="443.7" y1="370.7" x2="458.4" y2="370.7"/><line x1="447.6" y1="374.2" x2="454.6" y2="374.2"/></g>
<rect x="450.3" y="376" width="1.6" height="1.6" fill="#1e8080"/>
<rect x="26.4" y="633.5" width="38.699999999999996" height="25.5" fill="#00ffff" stroke="#1e6a6a" stroke-width="1.8"/>
<g stroke="#3a3a3a" stroke-width="1.5"><line x1="26.4" y1="621.1" x2="26.4" y2="633.5"/><line x1="65.1" y1="621.9" x2="65.1" y2="633.5"/></g>
<g stroke="#1e8080" stroke-width="1.6"><line x1="34.4" y1="638.0" x2="56.599999999999994" y2="638.0"/><line x1="38.099999999999994" y1="641.2" x2="52.8" y2="641.2"/><line x1="42.0" y1="644.7" x2="49.0" y2="644.7"/></g>
<rect x="44.7" y="646.5" width="1.6" height="1.6" fill="#1e8080"/>
<g stroke="#111" stroke-width="0.9" stroke-linejoin="miter">
<polygon points="539.8,367.9 532.8,379.2 546.8,379.2" fill="#f00"/>
<polygon points="539.8,367.9 551.4,360.59999999999997 551.4,374.4" fill="#f00"/>
<line x1="539.8" y1="367.9" x2="539.3" y2="357.4"/>
<line x1="539.5" y1="379.2" x2="539.5" y2="382.4"/>
<line x1="551.4" y1="367.2" x2="554.4" y2="367.2"/>
</g>
<polygon points="537.8,356.4 541.0,356.4 539.3,359.4" fill="#111"/>
<line x1="540.3" y1="356.9" x2="542.0" y2="355.4" stroke="#111" stroke-width="0.7"/>
<line x1="560.6" y1="369.5" x2="956" y2="369.5" stroke="#505050" stroke-width="1.4"/>
<polygon points="956,366.3 964,369.5 956,372.7" fill="#25d5dc" stroke="#1e6060" stroke-width="0.9"/>
<line x1="964" y1="369.5" x2="966.9" y2="369.5" stroke="#333" stroke-width="1"/>
<circle cx="558.6" cy="369.3" r="2" fill="#fff" stroke="#333" stroke-width="0.9"/>
<circle cx="968.9" cy="369.5" r="2" fill="#fff" stroke="#333" stroke-width="0.9"/>
<line x1="542.4" y1="399.5" x2="542.4" y2="614.3" stroke="#505050" stroke-width="1.4"/>
<polygon points="539.4,399.5 542.4,391.3 545.4,399.5" fill="#25d5dc" stroke="#1e6060" stroke-width="0.9"/>
<line x1="542.4" y1="391.3" x2="542.4" y2="388" stroke="#333" stroke-width="1"/>
<circle cx="541.7" cy="386" r="2" fill="#fff" stroke="#333" stroke-width="0.9"/>
<circle cx="542.4" cy="616.3" r="2" fill="#fff" stroke="#333" stroke-width="0.9"/>
<rect x="753.2" y="361.2" width="21.2" height="21.5" fill="#fff" stroke="#444" stroke-width="1.5" rx="0.8"/>
<rect x="533.7" y="490" width="20.7" height="21.4" fill="#fff" stroke="#444" stroke-width="1.5" rx="0.8"/>
<rect x="973" y="362.3" width="38.39999999999998" height="25.099999999999966" fill="#00ffff" stroke="#1e6a6a" stroke-width="1.8"/>
<g stroke="#3a3a3a" stroke-width="1.5"><line x1="973" y1="350" x2="973" y2="362.3"/><line x1="1011.4" y1="350.8" x2="1011.4" y2="362.3"/></g>
<g stroke="#1e8080" stroke-width="1.6"><line x1="981" y1="366.8" x2="1003.2" y2="366.8"/><line x1="984.7" y1="370.0" x2="999.4" y2="370.0"/><line x1="988.6" y1="373.5" x2="995.6" y2="373.5"/></g>
<rect x="991.3" y="375.3" width="1.6" height="1.6" fill="#1e8080"/>
<rect x="522.4" y="632.7" width="38.700000000000045" height="25.5" fill="#00ffff" stroke="#1e6a6a" stroke-width="1.8"/>
<g stroke="#3a3a3a" stroke-width="1.5"><line x1="522.4" y1="620.3" x2="522.4" y2="632.7"/><line x1="561.1" y1="621.0999999999999" x2="561.1" y2="632.7"/></g>
<g stroke="#1e8080" stroke-width="1.6"><line x1="530.4" y1="637.2" x2="552.6" y2="637.2"/><line x1="534.1" y1="640.4000000000001" x2="548.8" y2="640.4000000000001"/><line x1="538.0" y1="643.9000000000001" x2="545.0" y2="643.9000000000001"/></g>
<rect x="540.6999999999999" y="645.7" width="1.6" height="1.6" fill="#1e8080"/>
</svg>

<svg class="a" style="left:0;top:0" width="1024" height="1003" viewBox="0 0 1024 1003">
<rect x="28.80" y="283.90" width="340.20" height="40.60" fill="#fdfde5" stroke="#bdbdb3" stroke-width="1"/>
<line x1="187.80" y1="283.90" x2="187.80" y2="324.50" stroke="#c4c4ba" stroke-width="1"/>
<line x1="28.80" y1="304.40" x2="369.00" y2="304.40" stroke="#c4c4ba" stroke-width="1"/>
<rect x="28.80" y="328.80" width="340.20" height="20.10" fill="#fdfde5" stroke="#bdbdb3" stroke-width="1"/>
<line x1="187.80" y1="328.80" x2="187.80" y2="348.90" stroke="#c4c4ba" stroke-width="1"/>
<rect x="22.60" y="667.90" width="276.15" height="19.80" fill="#fdfde5" stroke="#bdbdb3" stroke-width="1"/>
<line x1="176.40" y1="667.90" x2="176.40" y2="687.70" stroke="#c4c4ba" stroke-width="1"/>
<rect x="22.60" y="691.60" width="276.15" height="39.90" fill="#fdfde5" stroke="#bdbdb3" stroke-width="1"/>
<line x1="176.40" y1="691.60" x2="176.40" y2="731.50" stroke="#c4c4ba" stroke-width="1"/>
<line x1="22.60" y1="712.20" x2="298.75" y2="712.20" stroke="#c4c4ba" stroke-width="1"/>
<rect x="525.10" y="283.40" width="339.90" height="40.10" fill="#fdfde5" stroke="#bdbdb3" stroke-width="1"/>
<line x1="684.00" y1="283.40" x2="684.00" y2="323.50" stroke="#c4c4ba" stroke-width="1"/>
<line x1="525.10" y1="304.00" x2="865.00" y2="304.00" stroke="#c4c4ba" stroke-width="1"/>
<rect x="525.10" y="328.40" width="339.90" height="19.60" fill="#fdfde5" stroke="#bdbdb3" stroke-width="1"/>
<line x1="684.00" y1="328.40" x2="684.00" y2="348.00" stroke="#c4c4ba" stroke-width="1"/>
<rect x="518.60" y="667.50" width="276.15" height="19.80" fill="#fdfde5" stroke="#bdbdb3" stroke-width="1"/>
<line x1="672.40" y1="667.50" x2="672.40" y2="687.30" stroke="#c4c4ba" stroke-width="1"/>
<rect x="518.60" y="691.25" width="276.15" height="40.35" fill="#fdfde5" stroke="#bdbdb3" stroke-width="1"/>
<line x1="672.40" y1="691.25" x2="672.40" y2="731.60" stroke="#c4c4ba" stroke-width="1"/>
<line x1="518.60" y1="711.60" x2="794.75" y2="711.60" stroke="#c4c4ba" stroke-width="1"/>
</svg>
<div class="t" style="left:34.00px;top:284.50px;font-size:15px;line-height:18px;letter-spacing:0.083px;color:#383838;">Pressure Loss Model</div>
<div class="t" style="left:192.00px;top:284.50px;font-size:15px;line-height:18px;letter-spacing:0.600px;color:#383838;">ISO 4126-1</div>
<div class="t" style="left:34.00px;top:305.00px;font-size:15px;line-height:18px;letter-spacing:0.078px;color:#383838;">Standard Orifice Size</div>
<div class="t" style="left:192.00px;top:305.00px;font-size:15px;line-height:18px;letter-spacing:0.797px;color:#383838;">E - 0.196in2 / 127mm2</div>
<div class="t" style="left:34.00px;top:329.10px;font-size:15px;line-height:18px;letter-spacing:-0.117px;color:#383838;">Flow</div>
<div class="t" style="left:192.00px;top:329.10px;font-size:15px;line-height:18px;letter-spacing:1.041px;color:#383838;">61.0142 m3/h</div>
<div class="t" style="left:27.70px;top:668.50px;font-size:15px;line-height:18px;letter-spacing:-0.700px;color:#383838;">Fluid</div>
<div class="t" style="left:181.00px;top:668.50px;font-size:15px;line-height:18px;letter-spacing:0.690px;color:#383838;">air [by mixture]</div>
<div class="t" style="left:27.70px;top:692.00px;font-size:15px;line-height:18px;letter-spacing:0.133px;color:#383838;">Stagnation Pressure</div>
<div class="t" style="left:181.10px;top:692.00px;font-size:15px;line-height:18px;letter-spacing:0.529px;color:#383838;">655.592 kPa a</div>
<div class="t" style="left:27.70px;top:712.70px;font-size:15px;line-height:18px;letter-spacing:0.280px;color:#383838;">Temperature</div>
<div class="t" style="left:181.10px;top:712.70px;font-size:15px;line-height:18px;letter-spacing:0.743px;color:#383838;">25.000 C</div>
<div class="t" style="left:530.00px;top:284.00px;font-size:15px;line-height:18px;letter-spacing:0.083px;color:#383838;">Pressure Loss Model</div>
<div class="t" style="left:688.10px;top:284.00px;font-size:15px;line-height:18px;letter-spacing:0.018px;color:#383838;">API RP520 Part1</div>
<div class="t" style="left:530.00px;top:304.50px;font-size:15px;line-height:18px;letter-spacing:0.078px;color:#383838;">Standard Orifice Size</div>
<div class="t" style="left:688.10px;top:304.50px;font-size:15px;line-height:18px;letter-spacing:0.797px;color:#383838;">E - 0.196in2 / 127mm2</div>
<div class="t" style="left:530.00px;top:328.60px;font-size:15px;line-height:18px;letter-spacing:-0.117px;color:#383838;">Flow</div>
<div class="t" style="left:688.10px;top:328.60px;font-size:15px;line-height:18px;letter-spacing:1.032px;color:#383838;">60.5324 m3/h</div>
<div class="t" style="left:523.70px;top:667.60px;font-size:15px;line-height:18px;letter-spacing:-0.700px;color:#383838;">Fluid</div>
<div class="t" style="left:677.10px;top:667.60px;font-size:15px;line-height:18px;letter-spacing:0.690px;color:#383838;">air [by mixture]</div>
<div class="t" style="left:523.70px;top:691.10px;font-size:15px;line-height:18px;letter-spacing:0.133px;color:#383838;">Stagnation Pressure</div>
<div class="t" style="left:677.10px;top:691.10px;font-size:15px;line-height:18px;letter-spacing:0.529px;color:#383838;">655.525 kPa a</div>
<div class="t" style="left:523.70px;top:711.80px;font-size:15px;line-height:18px;letter-spacing:0.280px;color:#383838;">Temperature</div>
<div class="t" style="left:677.10px;top:711.80px;font-size:15px;line-height:18px;letter-spacing:0.743px;color:#383838;">25.000 C</div>
<div class="t" style="left:428.40px;top:325.90px;font-size:15.0px;line-height:18px;color:#333;">2</div>
<div class="t" style="left:23.40px;top:596.70px;font-size:15.0px;line-height:18px;color:#333;">1</div>
<div class="t" style="left:969.50px;top:325.30px;font-size:15.0px;line-height:18px;color:#333;">5</div>
<div class="t" style="left:518.80px;top:595.30px;font-size:15.0px;line-height:18px;color:#333;">4</div>
<div class="t" style="left:238.00px;top:364.60px;font-size:15.0px;line-height:18px;letter-spacing:0.850px;color:#333;">-3</div>
<div class="t" style="left:41.00px;top:492.70px;font-size:15.0px;line-height:18px;letter-spacing:0.550px;color:#333;">-4</div>
<div class="t" style="left:756.80px;top:363.60px;font-size:15.0px;line-height:18px;letter-spacing:0.650px;color:#333;">-2</div>
<div class="t" style="left:537.00px;top:492.50px;font-size:15.0px;line-height:18px;letter-spacing:0.050px;color:#333;">-1</div>
</div>
</body></html>
